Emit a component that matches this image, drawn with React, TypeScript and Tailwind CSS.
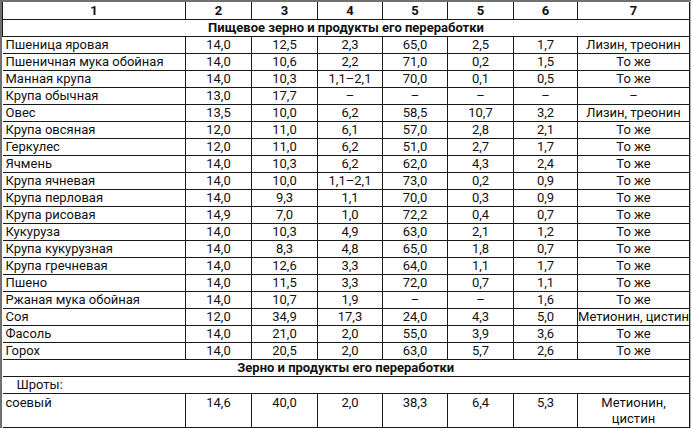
import React from "react";

type Row = [string, string, string, string, string, string, string, string];

const rows: Row[] = [
  ["Пшеница яровая", "14,0", "12,5", "2,3", "65,0", "2,5", "1,7", "Лизин, треонин"],
  ["Пшеничная мука обойная", "14,0", "10,6", "2,2", "71,0", "0,2", "1,5", "То же"],
  ["Манная крупа", "14,0", "10,3", "1,1–2,1", "70,0", "0,1", "0,5", "То же"],
  ["Крупа обычная", "13,0", "17,7", "–", "–", "–", "–", "–"],
  ["Овес", "13,5", "10,0", "6,2", "58,5", "10,7", "3,2", "Лизин, треонин"],
  ["Крупа овсяная", "12,0", "11,0", "6,1", "57,0", "2,8", "2,1", "То же"],
  ["Геркулес", "12,0", "11,0", "6,2", "51,0", "2,7", "1,7", "То же"],
  ["Ячмень", "14,0", "10,3", "6,2", "62,0", "4,3", "2,4", "То же"],
  ["Крупа ячневая", "14,0", "10,0", "1,1–2,1", "73,0", "0,2", "0,9", "То же"],
  ["Крупа перловая", "14,0", "9,3", "1,1", "70,0", "0,3", "0,9", "То же"],
  ["Крупа рисовая", "14,9", "7,0", "1,0", "72,2", "0,4", "0,7", "То же"],
  ["Кукуруза", "14,0", "10,3", "4,9", "63,0", "2,1", "1,2", "То же"],
  ["Крупа кукурузная", "14,0", "8,3", "4,8", "65,0", "1,8", "0,7", "То же"],
  ["Крупа гречневая", "14,0", "12,6", "3,3", "64,0", "1,1", "1,7", "То же"],
  ["Пшено", "14,0", "11,5", "3,3", "72,0", "0,7", "1,1", "То же"],
  ["Ржаная мука обойная", "14,0", "10,7", "1,9", "–", "–", "1,6", "То же"],
  ["Соя", "12,0", "34,9", "17,3", "24,0", "4,3", "5,0", "Метионин, цистин"],
  ["Фасоль", "14,0", "21,0", "2,0", "55,0", "3,9", "3,6", "То же"],
  ["Горох", "14,0", "20,5", "2,0", "63,0", "5,7", "2,6", "То же"],
];

const headers = ["1", "2", "3", "4", "5", "5", "6", "7"];

const cell = "border border-[#1a1a1a] p-0 leading-none";

const App: React.FC = () => {
  return (
    <div className="w-[691px] h-[429px] bg-white overflow-hidden">
      <div
        className="border-t-2 border-l-2 border-r-2 border-t-[#707070] border-l-[#707070] border-r-[#b0b0b0] text-[#111] text-[13px]"
        style={{ fontFamily: 'Roboto, "Noto Sans", sans-serif' }}
      >
        <table className="w-[687px] table-fixed border-collapse">
          <colgroup>
            <col className="w-[183px]" />
            <col className="w-[66px]" />
            <col className="w-[66px]" />
            <col className="w-[65px]" />
            <col className="w-[65px]" />
            <col className="w-[66px]" />
            <col className="w-[64px]" />
            <col className="w-[112px]" />
          </colgroup>
          <thead>
            <tr className="h-[17px]">
              {headers.map((h, i) => (
                <th key={i} className={`${cell} border-t-0 font-bold text-center`}>
                  {h}
                </th>
              ))}
            </tr>
          </thead>
          <tbody>
            <tr className="h-[17px]">
              <td colSpan={8} className={`${cell} font-bold text-center`}>
                Пищевое зерно и продукты его переработки
              </td>
            </tr>
            {rows.map((r, i) => (
              <tr key={i} className="h-[17px]">
                {r.map((v, j) => (
                  <td
                    key={j}
                    className={`${cell} ${j === 0 ? "text-left pl-[3px] border-l-0" : "text-center"} whitespace-nowrap`}
                  >
                    {v}
                  </td>
                ))}
              </tr>
            ))}
            <tr className="h-[17px]">
              <td colSpan={8} className={`${cell} border-l-0 font-bold text-center`}>
                Зерно и продукты его переработки
              </td>
            </tr>
            <tr className="h-[17px]">
              <td colSpan={8} className={`${cell} border-l-0 text-left pl-[14px]`}>
                Шроты:
              </td>
            </tr>
            <tr className="h-[33px]">
              {["соевый", "14,6", "40,0", "2,0", "38,3", "6,4", "5,3"].map((v, j) => (
                <td
                  key={j}
                  className={`${cell} align-top pt-[2px] ${j === 0 ? "text-left pl-[3px] border-l-0" : "text-center"}`}
                >
                  {v}
                </td>
              ))}
              <td className={`${cell} align-top pt-[1px] text-center`}>
                <div className="leading-[16px]">Метионин,</div>
                <div className="leading-[16px]">цистин</div>
              </td>
            </tr>
          </tbody>
        </table>
      </div>
    </div>
  );
};

export default App;
